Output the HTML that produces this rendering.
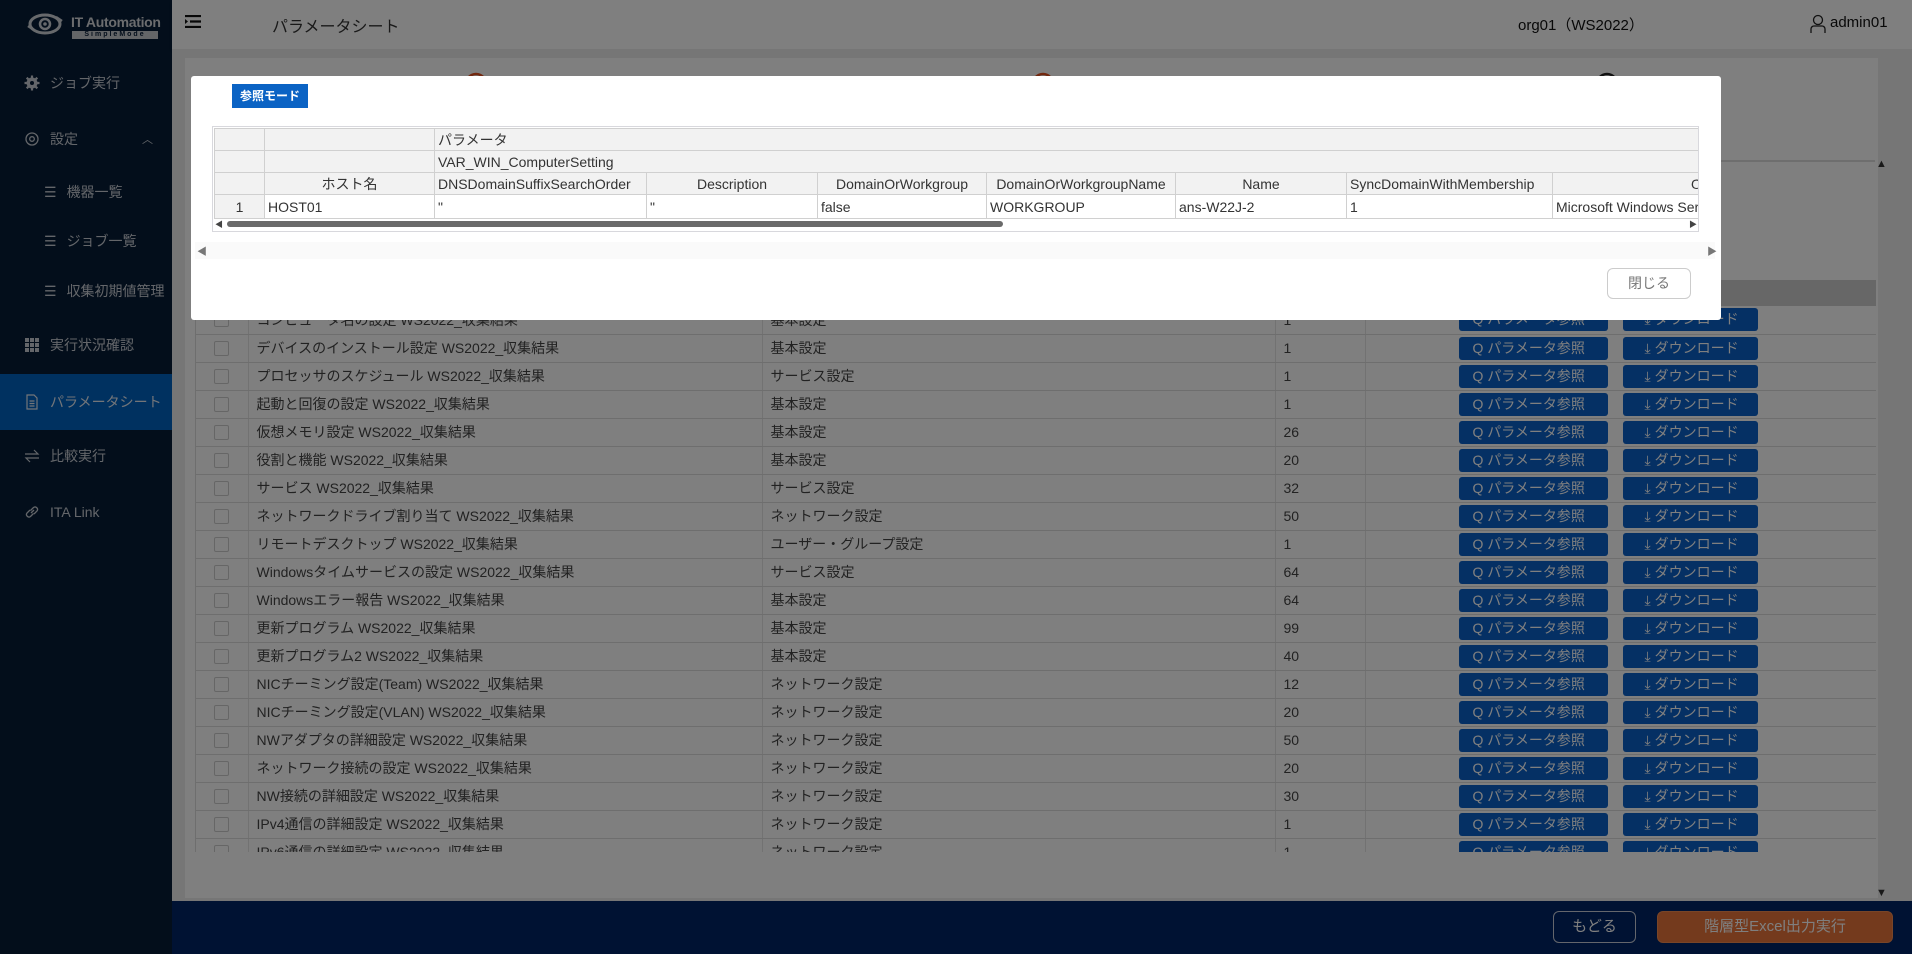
<!DOCTYPE html>
<html><head><meta charset="utf-8">
<style>
*{box-sizing:border-box;margin:0;padding:0}
body{width:1912px;height:954px;overflow:hidden;position:relative;font-family:"Liberation Sans","Noto Sans CJK JP",sans-serif;background:#eeeeee;color:#333}
.abs{position:absolute}
#side{left:0;top:0;width:172px;height:954px;background:#061c36}
.nav{position:absolute;left:0;width:172px;color:#c8cdd4;font-size:14px;display:flex;align-items:center}
.nav .ic{width:16px;height:16px;margin-left:24px;margin-right:10px;display:inline-block}
#hdr{left:172px;top:0;width:1740px;height:49px;background:#fff;box-shadow:0 2px 3px rgba(0,0,0,.1)}
#card{left:185px;top:58px;width:1693px;height:840px;background:#fff}
table.main{border-collapse:collapse;position:absolute;left:0;top:0;font-size:14px;table-layout:fixed}
table.main td{height:28px;border-bottom:1px solid #ddd;border-right:1px solid #e4e4e4;padding:0 8px;white-space:nowrap;overflow:hidden;color:#444}
.cb{width:15px;height:15px;border:1px solid #ccc;border-radius:2px;background:#fff;margin:0 auto}
.num{color:#1162b8}
.b1,.b2{position:absolute;top:2px;height:23px;background:#0b61c9;border-radius:3px;color:#fff;font-size:14px;line-height:23px}
.b1{left:93px;width:149px;padding-left:14px}
.b2{left:257px;width:135px;padding-left:22px}
#ov{left:0;top:0;width:1912px;height:954px;background:rgba(0,0,0,.5)}
#modal{left:191px;top:76px;width:1530px;height:244px;background:#fff;border-radius:3px}
table.pt{border-collapse:collapse;table-layout:fixed;font-size:14px;color:#333}
table.pt td{border:1px solid #d0d0d0;padding:0 3px;white-space:nowrap;overflow:hidden}
table.pt tr.h td{background:#f2f2f2}
</style></head><body>

<div id="side" class="abs">
  <svg class="abs" style="left:26px;top:12px" width="38" height="24" viewBox="0 0 38 24"><ellipse cx="19" cy="12" rx="15" ry="9" fill="none" stroke="#cfd3d8" stroke-width="3"/><circle cx="19" cy="12" r="5" fill="none" stroke="#cfd3d8" stroke-width="2.5"/><circle cx="19" cy="12" r="1.8" fill="#cfd3d8"/><path d="M2 14 L8 18 M30 5 L36 9" stroke="#cfd3d8" stroke-width="2.5"/></svg>
  <div class="abs" style="left:71px;top:14px;color:#d6d9dd;font-weight:bold;font-size:14px;letter-spacing:-0.3px">IT Automation</div>
  <div class="abs" style="left:72px;top:31px;width:86px;height:8px;background:#c9ccd0;color:#061c36;font-size:7px;line-height:8px;text-align:center;font-weight:bold;letter-spacing:2px">SimpleMode</div>

  <div class="nav" style="top:71px;height:24px"><svg class="ic" viewBox="0 0 16 16"><circle cx="8" cy="8" r="5.5" fill="#c8cdd4"/><circle cx="8" cy="8" r="2" fill="#061c36"/><path d="M8 0.5v3M8 12.5v3M0.5 8h3M12.5 8h3M2.7 2.7l2 2M11.3 11.3l2 2M2.7 13.3l2-2M11.3 4.7l2-2" stroke="#c8cdd4" stroke-width="2.2"/></svg>ジョブ実行</div>
  <div class="nav" style="top:127px;height:24px"><svg class="ic" viewBox="0 0 16 16"><circle cx="8" cy="8" r="6" fill="none" stroke="#c8cdd4" stroke-width="1.3"/><circle cx="8" cy="8" r="2.3" fill="none" stroke="#c8cdd4" stroke-width="1.3"/></svg>設定<span style="position:absolute;left:142px;font-size:11px">︿</span></div>
  <div class="nav" style="top:180px;height:24px;padding-left:20px"><span style="margin-left:24px;margin-right:10px;font-size:14px">☰</span>機器一覧</div>
  <div class="nav" style="top:229px;height:24px;padding-left:20px"><span style="margin-left:24px;margin-right:10px;font-size:14px">☰</span>ジョブ一覧</div>
  <div class="nav" style="top:279px;height:24px;padding-left:20px"><span style="margin-left:24px;margin-right:10px;font-size:14px">☰</span>収集初期値管理</div>
  <div class="nav" style="top:333px;height:24px"><svg class="ic" viewBox="0 0 16 16" fill="#c8cdd4"><rect x="1" y="1" width="4" height="4"/><rect x="6" y="1" width="4" height="4"/><rect x="11" y="1" width="4" height="4"/><rect x="1" y="6" width="4" height="4"/><rect x="6" y="6" width="4" height="4"/><rect x="11" y="6" width="4" height="4"/><rect x="1" y="11" width="4" height="4"/><rect x="6" y="11" width="4" height="4"/><rect x="11" y="11" width="4" height="4"/></svg>実行状況確認</div>
  <div class="nav" style="top:374px;height:56px;background:#0062c0;color:#e6ebf2"><svg class="ic" viewBox="0 0 16 16" fill="none" stroke="#e6ebf2" stroke-width="1.2"><path d="M3 1h7l3 3v11H3z"/><path d="M5.5 7h5M5.5 9.5h5M5.5 12h5"/></svg>パラメータシート</div>
  <div class="nav" style="top:444px;height:24px"><svg class="ic" viewBox="0 0 16 16" fill="none" stroke="#c8cdd4" stroke-width="1.2"><path d="M1 6h13l-4-4M15 10H2l4 4"/></svg>比較実行</div>
  <div class="nav" style="top:500px;height:24px"><svg class="ic" viewBox="0 0 16 16" fill="none" stroke="#c8cdd4" stroke-width="1.3"><path d="M7 9l3-3M6 6l-3 3a2.5 2.5 0 003.5 3.5l3-3M10 10l3-3A2.5 2.5 0 009.5 3.5l-3 3"/></svg>ITA Link</div>
</div>

<div id="hdr" class="abs">
  <svg class="abs" style="left:13px;top:15px" width="16" height="13" viewBox="0 0 16 13"><path d="M0 1h16M5 6.5h11M0 12h16" stroke="#111" stroke-width="2.2"/><path d="M0 4l3 2.5L0 9z" fill="#111"/></svg>
  <div class="abs" style="left:100px;top:13px;font-size:16px;color:#333">パラメータシート</div>
  <div class="abs" style="left:1346px;top:14px;font-size:15px;color:#111">org01（WS2022）</div>
  <svg class="abs" style="left:1638px;top:14px" width="16" height="19" viewBox="0 0 16 19" fill="none" stroke="#222" stroke-width="1.3"><circle cx="8" cy="6" r="4.5"/><path d="M1 19v-4a3 3 0 013-3h8a3 3 0 013 3v4"/></svg>
  <div class="abs" style="left:1658px;top:14px;font-size:15px;color:#111">admin01</div>
</div>
<div class="abs" style="left:172px;top:49px;width:1740px;height:852px;background:#ececec"></div>
<div id="card" class="abs"></div>
<svg class="abs" style="left:460px;top:68px" width="1170" height="16"><circle cx="16" cy="16" r="10" fill="none" stroke="#e5501e" stroke-width="2.5"/><circle cx="583" cy="16" r="10" fill="none" stroke="#e5501e" stroke-width="2.5"/><circle cx="1147" cy="16" r="10" fill="none" stroke="#222" stroke-width="2.5"/></svg>
<div class="abs" style="left:1150px;top:160px;width:725px;height:2px;background:#ddd"></div>
<div class="abs" style="left:1876px;top:158px;color:#333;font-size:11px">▲</div>
<div class="abs" style="left:1876px;top:887px;color:#333;font-size:11px">▼</div>

<div class="abs" style="left:195px;top:280px;width:1681px;height:572px;overflow:hidden;background:#fff;border-left:1px solid #ddd">
<div style="height:26px;background:#cfcfcf"></div>
<table class="main" style="top:26px;width:1681px">
<colgroup><col style="width:52px"><col style="width:514px"><col style="width:513px"><col style="width:90px"><col style="width:512px"></colgroup>
<tr><td><div class="cb"></div></td><td>コンピュータ名の設定 WS2022_収集結果</td><td>基本設定</td><td class="num">1</td><td style="position:relative"><span class="b1">Q パラメータ参照</span><span class="b2">⤓ ダウンロード</span></td></tr>
<tr><td><div class="cb"></div></td><td>デバイスのインストール設定 WS2022_収集結果</td><td>基本設定</td><td class="num">1</td><td style="position:relative"><span class="b1">Q パラメータ参照</span><span class="b2">⤓ ダウンロード</span></td></tr>
<tr><td><div class="cb"></div></td><td>プロセッサのスケジュール WS2022_収集結果</td><td>サービス設定</td><td class="num">1</td><td style="position:relative"><span class="b1">Q パラメータ参照</span><span class="b2">⤓ ダウンロード</span></td></tr>
<tr><td><div class="cb"></div></td><td>起動と回復の設定 WS2022_収集結果</td><td>基本設定</td><td class="num">1</td><td style="position:relative"><span class="b1">Q パラメータ参照</span><span class="b2">⤓ ダウンロード</span></td></tr>
<tr><td><div class="cb"></div></td><td>仮想メモリ設定 WS2022_収集結果</td><td>基本設定</td><td class="num">26</td><td style="position:relative"><span class="b1">Q パラメータ参照</span><span class="b2">⤓ ダウンロード</span></td></tr>
<tr><td><div class="cb"></div></td><td>役割と機能 WS2022_収集結果</td><td>基本設定</td><td class="num">20</td><td style="position:relative"><span class="b1">Q パラメータ参照</span><span class="b2">⤓ ダウンロード</span></td></tr>
<tr><td><div class="cb"></div></td><td>サービス WS2022_収集結果</td><td>サービス設定</td><td class="num">32</td><td style="position:relative"><span class="b1">Q パラメータ参照</span><span class="b2">⤓ ダウンロード</span></td></tr>
<tr><td><div class="cb"></div></td><td>ネットワークドライブ割り当て WS2022_収集結果</td><td>ネットワーク設定</td><td class="num">50</td><td style="position:relative"><span class="b1">Q パラメータ参照</span><span class="b2">⤓ ダウンロード</span></td></tr>
<tr><td><div class="cb"></div></td><td>リモートデスクトップ WS2022_収集結果</td><td>ユーザー・グループ設定</td><td class="num">1</td><td style="position:relative"><span class="b1">Q パラメータ参照</span><span class="b2">⤓ ダウンロード</span></td></tr>
<tr><td><div class="cb"></div></td><td>Windowsタイムサービスの設定 WS2022_収集結果</td><td>サービス設定</td><td class="num">64</td><td style="position:relative"><span class="b1">Q パラメータ参照</span><span class="b2">⤓ ダウンロード</span></td></tr>
<tr><td><div class="cb"></div></td><td>Windowsエラー報告 WS2022_収集結果</td><td>基本設定</td><td class="num">64</td><td style="position:relative"><span class="b1">Q パラメータ参照</span><span class="b2">⤓ ダウンロード</span></td></tr>
<tr><td><div class="cb"></div></td><td>更新プログラム WS2022_収集結果</td><td>基本設定</td><td class="num">99</td><td style="position:relative"><span class="b1">Q パラメータ参照</span><span class="b2">⤓ ダウンロード</span></td></tr>
<tr><td><div class="cb"></div></td><td>更新プログラム2 WS2022_収集結果</td><td>基本設定</td><td class="num">40</td><td style="position:relative"><span class="b1">Q パラメータ参照</span><span class="b2">⤓ ダウンロード</span></td></tr>
<tr><td><div class="cb"></div></td><td>NICチーミング設定(Team) WS2022_収集結果</td><td>ネットワーク設定</td><td class="num">12</td><td style="position:relative"><span class="b1">Q パラメータ参照</span><span class="b2">⤓ ダウンロード</span></td></tr>
<tr><td><div class="cb"></div></td><td>NICチーミング設定(VLAN) WS2022_収集結果</td><td>ネットワーク設定</td><td class="num">20</td><td style="position:relative"><span class="b1">Q パラメータ参照</span><span class="b2">⤓ ダウンロード</span></td></tr>
<tr><td><div class="cb"></div></td><td>NWアダプタの詳細設定 WS2022_収集結果</td><td>ネットワーク設定</td><td class="num">50</td><td style="position:relative"><span class="b1">Q パラメータ参照</span><span class="b2">⤓ ダウンロード</span></td></tr>
<tr><td><div class="cb"></div></td><td>ネットワーク接続の設定 WS2022_収集結果</td><td>ネットワーク設定</td><td class="num">20</td><td style="position:relative"><span class="b1">Q パラメータ参照</span><span class="b2">⤓ ダウンロード</span></td></tr>
<tr><td><div class="cb"></div></td><td>NW接続の詳細設定 WS2022_収集結果</td><td>ネットワーク設定</td><td class="num">30</td><td style="position:relative"><span class="b1">Q パラメータ参照</span><span class="b2">⤓ ダウンロード</span></td></tr>
<tr><td><div class="cb"></div></td><td>IPv4通信の詳細設定 WS2022_収集結果</td><td>ネットワーク設定</td><td class="num">1</td><td style="position:relative"><span class="b1">Q パラメータ参照</span><span class="b2">⤓ ダウンロード</span></td></tr>
<tr><td><div class="cb"></div></td><td>IPv6通信の詳細設定 WS2022_収集結果</td><td>ネットワーク設定</td><td class="num">1</td><td style="position:relative"><span class="b1">Q パラメータ参照</span><span class="b2">⤓ ダウンロード</span></td></tr>
</table>
</div>

<div class="abs" style="left:172px;top:901px;width:1740px;height:53px;background:#002466"></div>
<div class="abs" style="left:1553px;top:911px;width:83px;height:32px;border:1px solid #c8cdd8;border-radius:6px;color:#fff;font-size:15px;text-align:center;line-height:30px">もどる</div>
<div class="abs" style="left:1657px;top:911px;width:236px;height:32px;border:1px solid #f08a50;background:#e8743a;border-radius:6px;color:#fff;font-size:15px;text-align:center;line-height:30px">階層型Excel出力実行</div>

<div id="ov" class="abs"></div>

<div id="modal" class="abs">
  <div class="abs" style="left:41px;top:8px;width:76px;height:24px;background:#0b63c4;color:#fff;font-size:12px;font-weight:bold;line-height:24px;text-align:center">参照モード</div>
  <div class="abs" style="left:21px;top:50px;width:1487px;height:106px;border:1px solid #d8d8dd;overflow:hidden">
    <table class="pt" style="width:1560px;margin:1px 0 0 1px">
      <colgroup><col style="width:50px"><col style="width:170px"><col style="width:212px"><col style="width:171px"><col style="width:169px"><col style="width:189px"><col style="width:171px"><col style="width:206px"><col style="width:222px"></colgroup>
      <tr class="h" style="height:22px"><td></td><td></td><td colspan="7">パラメータ</td></tr>
      <tr class="h" style="height:22px"><td></td><td></td><td colspan="7">VAR_WIN_ComputerSetting</td></tr>
      <tr class="h" style="height:22px;text-align:center"><td></td><td>ホスト名</td><td style="text-align:left">DNSDomainSuffixSearchOrder</td><td>Description</td><td>DomainOrWorkgroup</td><td>DomainOrWorkgroupName</td><td>Name</td><td style="text-align:left">SyncDomainWithMembership</td><td style="text-align:left;padding-left:138px">OperatingSystem</td></tr>
      <tr style="height:24px"><td style="text-align:center;background:#f2f2f2">1</td><td>HOST01</td><td>"</td><td>"</td><td>false</td><td>WORKGROUP</td><td>ans-W22J-2</td><td>1</td><td>Microsoft Windows Server</td></tr>
    </table>
    <div class="abs" style="left:2px;top:92px;font-size:8px;color:#444">◀</div>
    <div class="abs" style="left:14px;top:94px;width:776px;height:6px;background:#6a6a6a;border-radius:3px"></div>
    <div class="abs" style="left:1476px;top:92px;font-size:8px;color:#444">▶</div>
  </div>
  <div class="abs" style="left:4px;top:166px;width:1520px;height:17px;background:#fafafa"></div>
  <div class="abs" style="left:6px;top:167px;font-size:10px;color:#777">◀</div>
  <div class="abs" style="left:1516px;top:167px;font-size:10px;color:#777">▶</div>
  <div class="abs" style="left:1416px;top:192px;width:84px;height:31px;border:1px solid #ccc;border-radius:6px;color:#777;font-size:14px;text-align:center;line-height:29px">閉じる</div>
</div>
</body></html>
